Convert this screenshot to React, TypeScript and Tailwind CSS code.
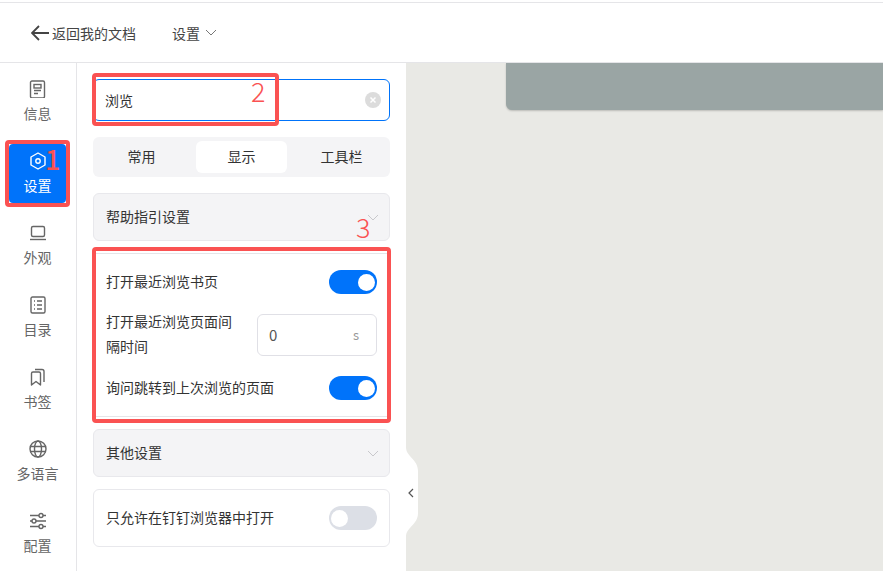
import { ReactNode } from "react"

const navItems: { label: string; active?: boolean; icon: ReactNode }[] = [
  {
    label: "信息",
    icon: (
      <>
        <rect x="1.5" y="1" width="14" height="17" rx="1.5" />
        <rect x="5" y="4.5" width="7" height="3.5" />
        <path d="M5 10.5h7M5 13.5h4" />
      </>
    ),
  },
  {
    label: "设置",
    active: true,
    icon: (
      <>
        <path d="M9 1l7 4v8l-7 4-7-4V5z" strokeLinejoin="round" />
        <circle cx="9" cy="9" r="2.2" />
      </>
    ),
  },
  {
    label: "外观",
    icon: (
      <>
        <rect x="2.5" y="2.5" width="13" height="10" rx="1.5" />
        <path d="M1 15.5h16" />
      </>
    ),
  },
  {
    label: "目录",
    icon: (
      <>
        <rect x="2" y="1" width="14" height="16" rx="1.5" />
        <path d="M5 5h1M8 5h5M5 9h1M8 9h5M5 13h1M8 13h5" />
      </>
    ),
  },
  {
    label: "书签",
    icon: (
      <>
        <path d="M2.5 17V5.5A1.5 1.5 0 0 1 4 4h6a1.5 1.5 0 0 1 1.5 1.5V17L7 13.5z" strokeLinejoin="round" />
        <path d="M6 1.5h7A2 2 0 0 1 15 3.5V14" />
      </>
    ),
  },
  {
    label: "多语言",
    icon: (
      <>
        <circle cx="9" cy="9" r="8" />
        <ellipse cx="9" cy="9" rx="3.5" ry="8" />
        <path d="M1 6.5h16M1 11.5h16" />
      </>
    ),
  },
  {
    label: "配置",
    icon: (
      <>
        <path d="M1 3.5h9M14 3.5h3M1 9h2M7 9h10M1 14.5h9M14 14.5h3" />
        <circle cx="12" cy="3.5" r="2" />
        <circle cx="5" cy="9" r="2" />
        <circle cx="12" cy="14.5" r="2" />
      </>
    ),
  },
]

function Toggle({ on }: { on: boolean }) {
  return (
    <div
      className={`flex h-6 w-12 shrink-0 items-center rounded-full px-[2px] ${
        on ? "justify-end bg-[#0073fa]" : "justify-start bg-[#dcdfe6]"
      }`}
    >
      <div className="h-[17px] w-[17px] rounded-full bg-white" />
    </div>
  )
}

function Chevron({ className }: { className: string }) {
  return (
    <svg width="12" height="7" viewBox="0 0 12 7" fill="none" stroke="currentColor" strokeWidth="1" className={className}>
      <path d="M1 1l5 5 5-5" />
    </svg>
  )
}

function Accordion({ title }: { title: string }) {
  return (
    <div className="flex h-12 items-center justify-between rounded-md border border-[#e8e8ec] bg-[#f4f4f6] pl-3 pr-[10px] text-[#333]">
      <span className="pb-[2px]">{title}</span>
      <Chevron className="text-[#c8c8cc]" />
    </div>
  )
}

export default function App() {
  return (
    <div
      className="relative flex h-[571px] w-[883px] flex-col overflow-hidden bg-white text-sm text-[#444]"
      style={{ fontFamily: '"Noto Sans CJK SC", "Liberation Sans", sans-serif' }}
    >
      {/* header */}
      <header className="mt-[2px] flex h-[61px] shrink-0 items-center border-y border-[#e5e5e8] pl-[31px]">
        <svg width="18" height="16" viewBox="0 0 18 16" fill="none" stroke="#444" strokeWidth="1.8">
          <path d="M8 1L1 8l7 7M1 8h17" />
        </svg>
        <span className="ml-[3px] w-[84px]">返回我的文档</span>
        <span className="ml-9">设置</span>
        <Chevron className="ml-[5px] text-[#777]" />
      </header>

      <div className="flex min-h-0 flex-1">
        {/* sidebar */}
        <nav className="flex w-[77px] shrink-0 flex-col gap-[13px] border-r border-[#e5e5e8] pl-[9px] pt-[9px]">
          {navItems.map((item) => (
            <div
              key={item.label}
              className={`flex h-[59px] w-[57px] flex-col items-center justify-center gap-[5px] rounded-sm leading-[20px] ${
                item.active ? "bg-[#0073fa] text-white" : "text-[#666]"
              }`}
            >
              <svg width="18" height="18" viewBox="0 0 18 18" fill="none" stroke="currentColor" strokeWidth="1.4">
                {item.icon}
              </svg>
              <span className="whitespace-nowrap">{item.label}</span>
            </div>
          ))}
        </nav>

        {/* settings panel */}
        <section className="flex w-[329px] shrink-0 flex-col px-4 pt-4">
          <div className="flex h-[42px] items-center justify-between rounded-md border border-[#0073fa] pl-[11px] pr-[8px] text-[#333]">
            <span>浏览</span>
            <div className="flex h-4 w-4 items-center justify-center rounded-full bg-[#dcdcdc]">
              <svg width="8" height="8" viewBox="0 0 8 8" stroke="#fff" strokeWidth="1.5">
                <path d="M1.5 1.5l5 5M6.5 1.5l-5 5" />
              </svg>
            </div>
          </div>

          <div className="mt-4 grid h-10 grid-cols-3 items-center gap-[9px] rounded-md bg-[#f4f4f6] px-[3px] text-center text-[#333]">
            <span className="pb-[2px]">常用</span>
            <span className="flex h-8 items-center justify-center rounded-md bg-white pb-[2px]">显示</span>
            <span className="pb-[2px]">工具栏</span>
          </div>

          <div className="mt-4">
            <Accordion title="帮助指引设置" />
          </div>

          <div className="mt-3 flex h-[164px] flex-col border-y border-[#e5e5e8] px-[13px] text-[#333]">
            <div className="mt-4 flex h-6 items-center justify-between">
              <span className="pb-[2px]">打开最近浏览书页</span>
              <Toggle on />
            </div>
            <div className="mt-5 flex h-[42px] items-center justify-between">
              <span className="w-[130px] pb-[2px] leading-[25px]">打开最近浏览页面间隔时间</span>
              <div className="flex h-[42px] w-[120px] items-center justify-between rounded-md border border-[#e0e0e6] pl-[11px] pr-[17px]">
                <span className="text-[15px] text-[#555]">0</span>
                <span className="text-[13px] text-[#999]">s</span>
              </div>
            </div>
            <div className="mt-5 flex h-6 items-center justify-between">
              <span className="pb-[3px]">询问跳转到上次浏览的页面</span>
              <Toggle on />
            </div>
          </div>

          <div className="mt-3">
            <Accordion title="其他设置" />
          </div>

          <div className="mt-3 flex h-[58px] items-center justify-between rounded-md border border-[#e8e8ec] px-3 text-[#333]">
            <span className="pb-[3px]">只允许在钉钉浏览器中打开</span>
            <Toggle on={false} />
          </div>
        </section>

        {/* canvas */}
        <main className="relative min-w-0 flex-1 overflow-hidden bg-[#e9e9e5]">
          <div className="ml-[100px] h-[47px] rounded-bl-md bg-[#9aa5a4] shadow-[0_1px_2px_rgba(0,0,0,0.2)]" />
          {/* collapse handle */}
          <svg width="12" height="90" viewBox="0 0 12 90" className="absolute left-0 top-[384px]">
            <path d="M0 0C0 10 12 12 12 24V66C12 78 0 80 0 90Z" fill="#fff" />
            <path d="M7 42l-4 4 4 4" fill="none" stroke="#555" strokeWidth="1.2" />
          </svg>
        </main>
      </div>

      {/* red annotations */}
      <div className="absolute left-[5px] top-[140px] h-[67px] w-[65px] rounded-sm border-[4px] border-[#fa5252]" />
      <div className="absolute left-[92px] top-[73px] h-[53px] w-[187px] rounded-sm border-[4px] border-[#fa5252]" />
      <div className="absolute left-[92px] top-[247px] h-[176px] w-[299px] rounded-sm border-[4px] border-[#fa5252]" />
      <span className="absolute left-[45px] top-[143px] text-[27px] font-medium leading-[32px] text-[#fa5252]">1</span>
      <span className="absolute left-[251px] top-[75px] text-[27px] font-light leading-[32px] text-[#fa5252]">2</span>
      <span className="absolute left-[356px] top-[211px] text-[27px] font-light leading-[32px] text-[#fa5252]">3</span>
    </div>
  )
}
